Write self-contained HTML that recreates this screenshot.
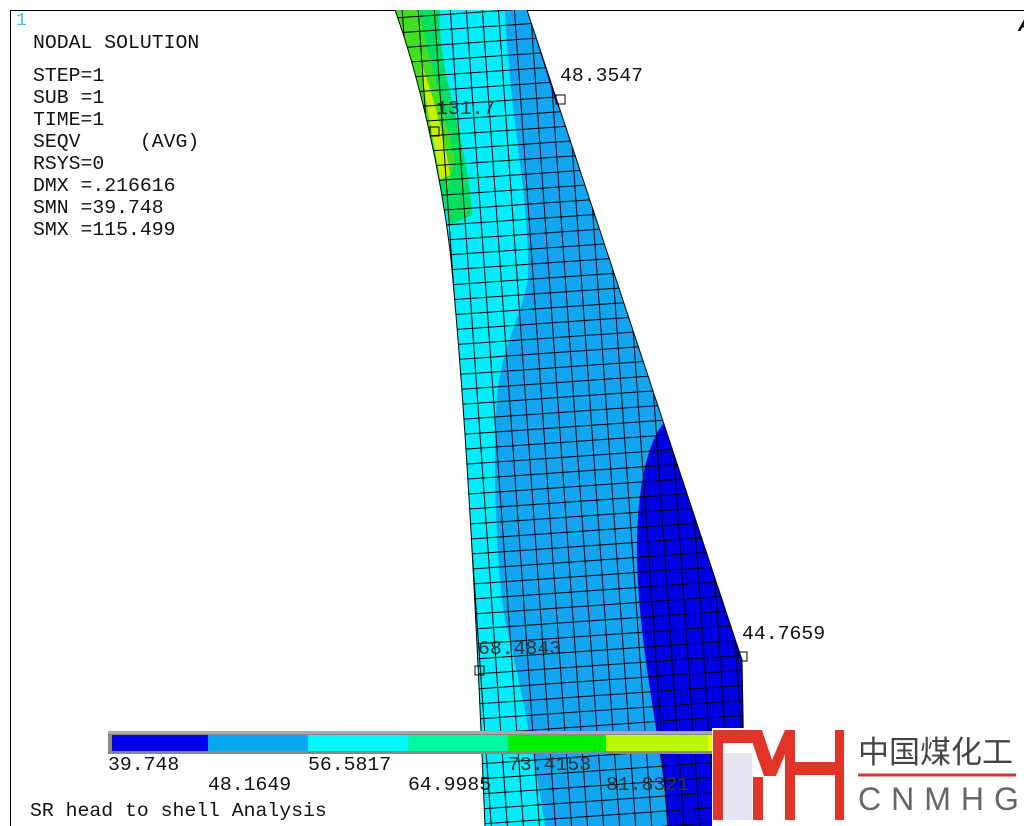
<!DOCTYPE html>
<html><head><meta charset="utf-8"><style>
html,body{margin:0;padding:0;background:#fff;width:1024px;height:826px;overflow:hidden;position:relative}
.t{position:absolute;font-family:"Liberation Mono",monospace;font-size:19.8px;color:#111;white-space:pre;line-height:22px}
</style></head><body>
<svg width="1024" height="826" style="position:absolute;left:0;top:0">
<defs>
<clipPath id="band"><path d="M395,10 C420,80 440,170 450,250 C465,400 476,600 485,826 L745,826 L742,660 L527,10 Z"/></clipPath>
<pattern id="mesh" width="16" height="15" patternUnits="userSpaceOnUse" patternTransform="rotate(-4)">
<path d="M0,0.5H16M0.5,0V15" stroke="#000" stroke-width="1" fill="none"/>
</pattern>
</defs>
<line x1="10" y1="10.5" x2="1024" y2="10.5" stroke="#000"/>
<line x1="10.5" y1="10" x2="10.5" y2="826" stroke="#000"/>
<g clip-path="url(#band)">
<rect x="380" y="0" width="400" height="826" fill="#00eefc"/>
<path d="M505,10 L527,10 L742,660 L745,826 L545,826 C535,760 520,680 505,620 C495,560 493,450 497,400 C500,350 520,320 528,280 C530,200 510,120 505,10 Z" fill="#12a6f0"/>
<path d="M667,420 L742,660 L745,826 L668,826 C662,740 640,660 637,560 C636,500 645,440 667,420 Z" fill="#0000e6"/>
<path d="M527,10 L548,10 C552,60 560,100 572,135 L555,100 Z" fill="#0000e6"/>
<path d="M380,10 L440,10 C435,60 470,150 472,215 L450,225 C430,150 410,80 380,10 Z" fill="#00e060"/>
<path d="M395,10 L420,10 C425,50 440,90 455,160 L448,190 C430,130 410,70 395,10 Z" fill="#40e020"/>
<path d="M420,60 C435,100 445,140 450,175 L440,180 C432,130 425,100 420,60 Z" fill="#c8f000"/>
<rect x="380" y="0" width="400" height="826" fill="url(#mesh)"/>
</g>
<path d="M395,10 C420,80 440,170 450,250 C465,400 476,600 485,826 M745,826 L742,660 L527,10" stroke="#000" fill="none"/>
<rect x="430" y="127" width="9" height="9" fill="none" stroke="#000"/>
<rect x="556" y="95" width="9" height="9" fill="none" stroke="#000"/>
<rect x="475" y="666" width="9" height="9" fill="none" stroke="#000"/>
<rect x="738" y="652" width="9" height="9" fill="none" stroke="#000"/>
<rect x="108" y="731" width="606" height="23" fill="#888"/>
<rect x="108" y="731" width="606" height="3" fill="#aaa"/>
<rect x="112" y="735" width="96" height="16" fill="#0000ee"/>
<rect x="208" y="735" width="100" height="16" fill="#0aa8f2"/>
<rect x="308" y="735" width="100" height="16" fill="#00f8f8"/>
<rect x="408" y="735" width="100" height="16" fill="#00f8a0"/>
<rect x="508" y="735" width="98" height="16" fill="#00ee00"/>
<rect x="606" y="735" width="102" height="16" fill="#b8f800"/>
<rect x="708" y="735" width="4" height="16" fill="#f8f800"/>
<rect x="712" y="728" width="312" height="98" fill="#fff"/>
<rect x="723" y="753" width="29" height="67" fill="#e6e6f2"/>
<g fill="#e03428">
<rect x="713" y="730" width="10" height="90"/>
<rect x="713" y="730" width="49" height="13"/>
<path d="M748,730 L762,730 L772,760 L785,730 L795,730 L776,776 L764,776 Z"/>
<rect x="753" y="777" width="10" height="43"/>
<rect x="785" y="730" width="10" height="90"/>
<rect x="795" y="762" width="42" height="13"/>
<rect x="835" y="730" width="9" height="90"/>
</g>
<line x1="858" y1="775" x2="1016" y2="775" stroke="#e03428" stroke-width="3"/>
</svg>
<div class="t" style="left:16px;top:10px;color:#3cc;font-size:18px">1</div>
<div class="t" style="left:33px;top:32px">NODAL SOLUTION</div>
<div class="t" style="left:33px;top:65px">STEP=1
SUB =1
TIME=1
SEQV     (AVG)
RSYS=0
DMX =.216616
SMN =39.748
SMX =115.499</div>
<div class="t" style="left:560px;top:65px">48.3547</div>
<div class="t" style="left:436px;top:98px;color:#333">131.7</div>
<div class="t" style="left:478px;top:638px;color:#333">68.4843</div>
<div class="t" style="left:742px;top:623px">44.7659</div>
<div class="t" style="left:108px;top:754px">39.748</div>
<div class="t" style="left:308px;top:754px">56.5817</div>
<div class="t" style="left:508px;top:754px;color:#333">73.4153</div>
<div class="t" style="left:208px;top:774px">48.1649</div>
<div class="t" style="left:408px;top:774px">64.9985</div>
<div class="t" style="left:606px;top:774px;color:#333">81.8321</div>
<div class="t" style="left:30px;top:800px">SR head to shell Analysis</div>
<div class="t" style="left:858px;top:734px;font-family:'Liberation Sans','Noto Sans CJK SC',sans-serif;font-size:31px;line-height:38px;color:#444">中国煤化工</div>
<div class="t" style="left:858px;top:780px;font-family:'Liberation Sans',sans-serif;font-size:32px;line-height:38px;color:#666;letter-spacing:10px">CNMHG</div>
<div class="t" style="left:1018px;top:14px;font-family:'Liberation Sans',sans-serif;font-weight:bold;font-style:italic;font-size:20px">A</div>
</body></html>
